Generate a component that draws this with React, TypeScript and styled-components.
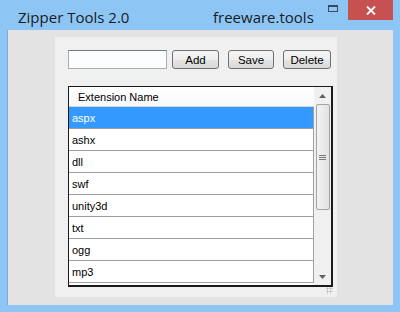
import React from 'react';
import styled, { createGlobalStyle } from 'styled-components';

const extensions = ['aspx', 'ashx', 'dll', 'swf', 'unity3d', 'txt', 'ogg', 'mp3'];

const GlobalStyle = createGlobalStyle`
  html, body {
    margin: 0;
    padding: 0;
    background: #8dc5f5;
  }
`;

const Window = styled.div`
  width: 400px;
  height: 312px;
  background: #8dc5f5;
  display: flex;
  flex-direction: column;
  font-family: 'Liberation Sans', Arial, sans-serif;
`;

const TitleBar = styled.div`
  height: 30px;
  display: flex;
  align-items: flex-start;
  font-family: 'Open Sans', 'Noto Sans', sans-serif;
  font-size: 15px;
  color: #1b1b1b;
`;

const Title = styled.span`
  margin: 7px 0 0 18px;
  width: 195px;
`;

const Brand = styled.span`
  margin-top: 7px;
`;

const Controls = styled.div`
  margin-left: auto;
  margin-right: 7px;
  display: flex;
  align-items: flex-start;
`;

const MaxButton = styled.div`
  width: 26px;
  height: 20px;
  display: flex;
  align-items: center;
  justify-content: center;
  margin-right: 2px;
  &::after {
    content: '';
    width: 8px;
    height: 4px;
    border: 1px solid #3a4a5c;
    border-top-width: 2px;
    margin-top: -4px;
  }
`;

const CloseButton = styled.div`
  width: 45px;
  height: 20px;
  background: #c75050;
  display: flex;
  align-items: center;
  justify-content: center;
`;

const Client = styled.div`
  margin: 0 7px;
  height: 275px;
  background: #e3e3e3;
  border-left: 1px solid #7fa9cf;
  box-sizing: border-box;
  padding: 7px 0 0 47px;
`;

const Panel = styled.div`
  width: 282px;
  height: 260px;
  background: #f0f0f0;
  box-sizing: border-box;
  padding: 13px 0 0 13px;
  position: relative;
`;

const Toolbar = styled.div`
  display: flex;
  align-items: center;
  height: 19px;
`;

const TextBox = styled.div`
  width: 99px;
  height: 19px;
  box-sizing: border-box;
  border: 1px solid #abadb3;
  border-top-color: #6d7b85;
  background: #fbfdff;
  margin-right: 5px;
`;

const Button = styled.div<{ $w: number; $gap?: number }>`
  width: ${p => p.$w}px;
  height: 19px;
  box-sizing: border-box;
  margin-right: ${p => p.$gap ?? 0}px;
  border: 1px solid #707070;
  border-radius: 3px;
  background: linear-gradient(#f4f4f4 0%, #eeeeee 50%, #e4e4e4 51%, #d9d9d9 100%);
  font-size: 11.5px;
  color: #000;
  display: flex;
  align-items: center;
  justify-content: center;
`;

const Grid = styled.div`
  margin-top: 17px;
  width: 265px;
  height: 201px;
  box-sizing: border-box;
  border: 1px solid #1a1a1a;
  border-right-width: 2px;
  border-bottom-width: 2px;
  background: #fff;
  display: flex;
  overflow: hidden;
`;

const Cells = styled.div`
  flex: 1;
  display: flex;
  flex-direction: column;
`;

const Header = styled.div`
  height: 19px;
  flex: none;
  font-size: 11px;
  padding-left: 9px;
  display: flex;
  align-items: center;
  background: linear-gradient(#ffffff, #f7f8fa);
  border-bottom: 1px solid #d5d5d5;
`;

const Row = styled.div<{ $selected?: boolean }>`
  height: 22px;
  flex: none;
  box-sizing: border-box;
  font-size: 11px;
  padding-left: 3px;
  display: flex;
  align-items: center;
  border-bottom: 1px solid #a0a0a0;
  border-right: 1px solid #a0a0a0;
  background: ${p => (p.$selected ? '#3399ff' : '#fff')};
  color: ${p => (p.$selected ? '#fff' : '#000')};
`;

const ScrollBar = styled.div`
  width: 17px;
  flex: none;
  background: #f0f0f0;
  display: flex;
  flex-direction: column;
  align-items: center;
`;

const Arrow = styled.div`
  height: 17px;
  display: flex;
  align-items: center;
  justify-content: center;
`;

const Thumb = styled.div`
  width: 14px;
  height: 106px;
  box-sizing: border-box;
  border: 1px solid #a3a3a3;
  border-radius: 2px;
  background: linear-gradient(90deg, #f3f3f3, #e2e2e2);
  display: flex;
  align-items: center;
  justify-content: center;
`;

const Track = styled.div`
  flex: 1;
`;

const Grip = styled.div`
  position: absolute;
  right: 4px;
  bottom: 3px;
  width: 7px;
  height: 7px;
  background-image: radial-gradient(#b8b8b8 45%, transparent 50%);
  background-size: 3px 3px;
`;

const App = () => {
  return (
    <Window>
      <GlobalStyle />
      <TitleBar>
        <Title>Zipper Tools 2.0</Title>
        <Brand>freeware.tools</Brand>
        <Controls>
          <MaxButton />
          <CloseButton>
            <svg width="10" height="9" viewBox="0 0 10 9">
              <path d="M1 0.5 L9 8.5 M9 0.5 L1 8.5" stroke="#fff" strokeWidth="1.8" />
            </svg>
          </CloseButton>
        </Controls>
      </TitleBar>
      <Client>
        <Panel>
          <Toolbar>
            <TextBox />
            <Button $w={47} $gap={9}>Add</Button>
            <Button $w={46} $gap={9}>Save</Button>
            <Button $w={48}>Delete</Button>
          </Toolbar>
          <Grid>
            <Cells>
              <Header>Extension Name</Header>
              {extensions.map((ext, i) => (
                <Row key={ext} $selected={i === 0}>{ext}</Row>
              ))}
            </Cells>
            <ScrollBar>
              <Arrow>
                <svg width="7" height="4" viewBox="0 0 7 4">
                  <path d="M0 4 L3.5 0 L7 4 Z" fill="#606060" />
                </svg>
              </Arrow>
              <Thumb>
                <svg width="7" height="7" viewBox="0 0 7 7">
                  <path d="M0 1.5 H7 M0 3.5 H7 M0 5.5 H7" stroke="#777" strokeWidth="1" />
                </svg>
              </Thumb>
              <Track />
              <Arrow>
                <svg width="7" height="4" viewBox="0 0 7 4">
                  <path d="M0 0 L3.5 4 L7 0 Z" fill="#606060" />
                </svg>
              </Arrow>
            </ScrollBar>
          </Grid>
          <Grip />
        </Panel>
      </Client>
    </Window>
  );
};

export default App;
